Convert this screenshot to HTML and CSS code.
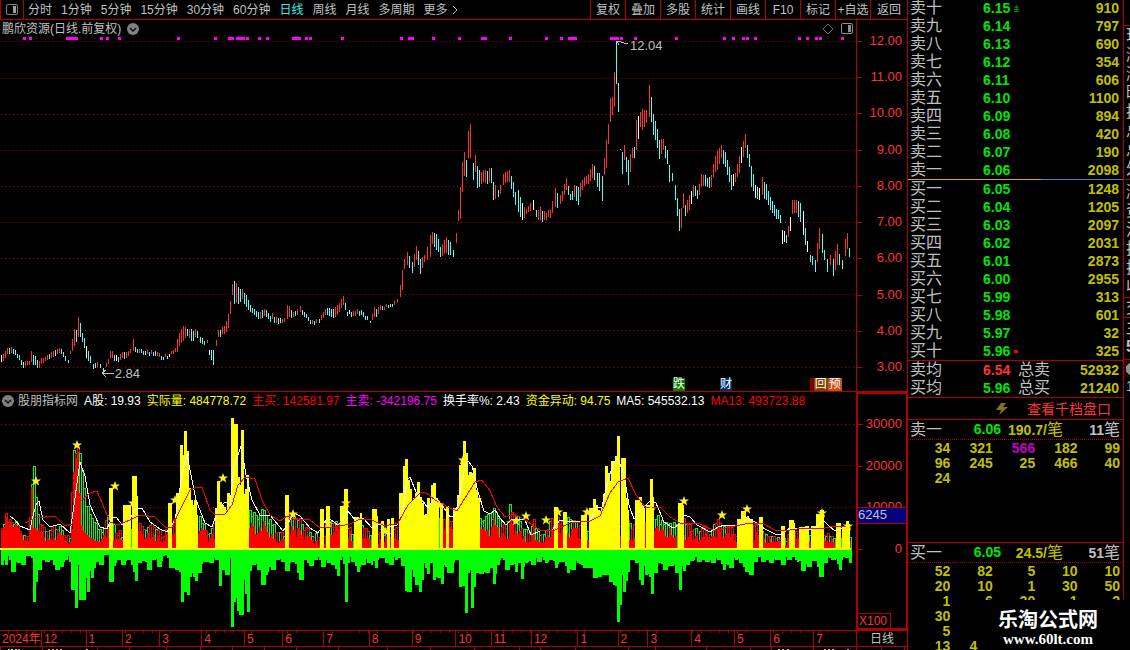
FILE: index.html
```html
<!DOCTYPE html>
<html lang="zh-CN">
<head>
<meta charset="utf-8">
<title>鹏欣资源 日线</title>
<link rel="stylesheet" href="styles.css">
</head>
<body>
<div class="app">
  <main class="main">
    <nav class="toolbar">
      <button class="layout-btn" aria-label="布局"><svg width="12" height="11" viewBox="0 0 12 11"><rect x="0.5" y="0.5" width="11" height="10" rx="1.5" fill="none" stroke="#808080"/><rect x="7" y="2" width="3" height="7" fill="#a0a0a0"/></svg></button>
      <div class="periods">
        <button>分时</button><button>1分钟</button><button>5分钟</button><button>15分钟</button><button>30分钟</button><button>60分钟</button><button class="active">日线</button><button>周线</button><button>月线</button><button>多周期</button><button class="more">更多<svg width="6" height="10" viewBox="0 0 6 10"><path d="M1 1l4 4-4 4" fill="none" stroke="#c0c0c0"/></svg></button>
      </div>
      <div class="actions">
        <button>复权</button><button>叠加</button><button>多股</button><button>统计</button><button>画线</button><button>F10</button><button>标记</button><button>+自选</button><button>返回</button>
      </div>
    </nav>

    <section class="pane price">
      <div class="plot">
        <header class="legend">
          <span class="title">鹏欣资源(日线.前复权)</span>
          <button class="fold" aria-label="展开"><svg width="12" height="12" viewBox="0 0 12 12"><circle cx="6" cy="6" r="6" fill="#808080"/><path d="M3 5l3 3 3-3" fill="none" stroke="#111" stroke-width="1.5"/></svg></button>
          <span class="tools"><svg width="12" height="12" viewBox="0 0 12 12"><path d="M6 1l5 5-5 5-5-5z" fill="none" stroke="#707070"/></svg><svg width="12" height="11" viewBox="0 0 12 11"><rect x="0.5" y="0.5" width="11" height="10" rx="1.5" fill="none" stroke="#909090"/><rect x="7" y="2" width="3" height="7" fill="#909090"/></svg></span>
        </header>
        <svg class="chart" id="price" viewBox="0 37 856 354" preserveAspectRatio="none"></svg>
        <span class="note high">12.04</span>
        <span class="note low">2.84</span>
        <span class="badge fall">跌</span>
        <span class="badge fin">财</span>
        <span class="badge group"><i></i><b class="buy">回</b><b class="pre">预</b></span>
      </div>
      <div class="axis price-axis"><span>12.00</span><span>11.00</span><span>10.00</span><span>9.00</span><span>8.00</span><span>7.00</span><span>6.00</span><span>5.00</span><span>4.00</span><span>3.00</span></div>
    </section>

    <section class="pane volume">
      <div class="plot">
        <header class="legend values">
          <button class="fold" aria-label="展开"><svg width="12" height="12" viewBox="0 0 12 12"><circle cx="6" cy="6" r="6" fill="#808080"/><path d="M3 5l3 3 3-3" fill="none" stroke="#111" stroke-width="1.5"/></svg></button>
          <span class="title">股朋指标网</span><span class="white">A股: 19.93</span><span class="yellow">实际量: 484778.72</span><span class="red">主买: 142581.97</span><span class="magenta">主卖: -342196.75</span><span class="white">换手率%: 2.43</span><span class="yellow">资金异动: 94.75</span><span class="white">MA5: 545532.13</span><span class="red">MA13: 493723.88</span>
        </header>
        <svg class="chart" id="volume" viewBox="0 409 856 221" preserveAspectRatio="none"></svg>
      </div>
      <div class="axis volume-axis"><span>30000</span><span>20000</span><span>10000</span><span>0</span><b class="current">6245</b><em class="unit">X100</em></div>
    </section>

    <footer class="dates"><div class="months" id="months"></div><span class="period">日线</span></footer>
    <div class="ticker"><svg class="chart" id="ticker" viewBox="0 647 907 3" preserveAspectRatio="none"></svg></div>
  </main>

  <aside class="book">
    <table class="depth asks" id="asks"></table>
    <div class="split"></div>
    <table class="depth" id="bids"></table>
    <table class="depth sums" id="sums"></table>
    <a class="more-depth" href="#"><svg width="14" height="14" viewBox="0 0 14 14"><path d="M6 1h5L8 5h5L4 13l2-5H1z" fill="#807028"/></svg><span>查看千档盘口</span></a>
    <section class="queue sell">
      <header><span>卖一</span><b class="up">6.06</b><b class="avg">190.7/<i>笔</i></b><b class="cnt">11<i>笔</i></b></header>
      <div class="lots" id="sell"></div>
    </section>
    <section class="queue">
      <header><span>买一</span><b class="up">6.05</b><b class="avg">24.5/<i>笔</i></b><b class="cnt">51<i>笔</i></b></header>
      <div class="lots" id="buy"></div>
    </section>
  </aside>

  <aside class="edge">
    <div class="edge-a"></div>
    <div class="edge-b">现<br>涨<br>涨<br>昨<br>换<br>总<br>总<br>外</div>
    <div class="edge-c">涨<br>资<br>流<br>换<br>换<br>收</div>
    <div class="edge-d">交</div>
    <div class="edge-e">主<br><b>5</b></div>
    <div class="edge-f"></div>
    <div class="edge-g">1</div>
  </aside>

  <div class="brand"><strong>乐淘公式网</strong><span>www.60lt.com</span></div>
</div>
<script src="app.js"></script>
</body>
</html>
```
FILE: styles.css
```css
* { box-sizing: border-box; }
body {
  margin: 0;
  background: #000;
  color: #c0c0c0;
  font: 12px/14px "Liberation Sans", "Noto Sans CJK SC", sans-serif;
}
button { margin: 0; padding: 0; border: 0; background: none; color: inherit; font: inherit; white-space: nowrap; }
svg { display: block; }
i, em { font-style: normal; }

.app { position: relative; display: grid; grid-template-columns: 1fr 216px 6px; height: 100vh; overflow: hidden; }
.main { display: grid; grid-template-rows: 20px 372fr 238fr 17px 3px; min-width: 0; min-height: 0; border-right: 1px solid #b00000; }

.toolbar { display: flex; border-bottom: 1px solid #b00000; border-left: 1px solid #b00000; line-height: 18px; }
.layout-btn { display: flex; align-items: center; justify-content: center; width: 23px; border-right: 1px solid #b00000; }
.periods { display: flex; gap: 9px; padding-left: 4px; flex: 1; }
.active { color: #40f0f0; }
.more { display: flex; align-items: center; gap: 4px; }
.actions { display: flex; }
.actions button { width: 35px; border-left: 1px solid #b00000; text-align: center; }
.actions button:last-child { width: 37px; }

.pane { display: grid; grid-template-columns: 1fr 51px; min-height: 0; }
.plot { position: relative; display: flex; flex-direction: column; min-width: 0; min-height: 0; }
.chart { width: 100%; flex: 1; min-height: 0; shape-rendering: crispEdges; }
.price { border-bottom: 1px solid #b00000; }
.legend { display: flex; align-items: center; height: 17px; padding-left: 2px; gap: 6px; white-space: nowrap; }
.values .title { margin-left: -2px; }
.fold { width: 12px; }
.tools { display: flex; align-items: center; gap: 7px; margin-left: auto; padding-right: 3px; }
.white { color: #fff; }
.yellow { color: #ff0; }
.red { color: #f00; }
.magenta { color: #f0f; }

.axis { position: relative; display: flex; flex-direction: column; justify-content: space-between; text-align: right; color: #ff3232; font-size: 13px; }
.price-axis { border-left: 1px solid #b00000; padding: 14px 5px 17px 0; }
.volume-axis { border: 2px solid #b00000; border-right-width: 1px; padding: 23px 4px 72px 0; }
.axis span { position: relative; }
.axis span::before { content: ""; position: absolute; left: 0; top: 7px; width: 5px; height: 1px; background: #b00000; }
.current { position: absolute; left: 0; right: 0; top: 113px; height: 17px; background: #000080; border: solid #b00000; border-width: 1px 0; color: #c0c0c0; font-weight: 400; text-align: left; }
.unit { position: absolute; left: 0; bottom: 0; padding: 0 3px 0 1px; border: solid #b00000; border-width: 1px 1px 0 0; font-size: 12px; }

.note { position: absolute; font-size: 13px; }
.high { left: 73.6%; top: 19px; }
.low { left: 13.4%; bottom: 10px; }
.badge { position: absolute; bottom: 0; color: #fff; line-height: 13px; height: 13px; }
.fall { left: 78.6%; background: #008000; }
.fin { left: 84.1%; background: #003068; }
.group { display: flex; left: 94.6%; }
.group i { width: 4px; background: #800000; }
.group b { font-weight: 400; padding: 0 1px; }
.buy { background: #804000; }
.pre { background: #c05010; }

.dates { display: grid; grid-template-columns: 1fr 50px; border: solid #b00000; border-width: 1px 0; line-height: 16px; }
.months { display: flex; color: #ff3232; min-width: 0; background: repeating-linear-gradient(90deg, transparent 0 8px, #b00000 8px 9px) top / 100% 2px no-repeat; }
.months span { flex: 1 1 0; min-width: 0; border-right: 1px solid #b00000; padding-left: 2px; white-space: nowrap; }
.period { text-align: center; }
.ticker { display: flex; min-height: 0; }

.book { min-width: 0; border-right: 1px solid #b00000; overflow: hidden; }
.depth { width: 100%; border-collapse: collapse; table-layout: fixed; font-size: 16px; line-height: 18px; }
.asks { margin-top: -1px; }
.depth td, .depth th { padding: 0; height: 18px; font-weight: 400; text-align: left; white-space: nowrap; }
.depth th { width: 75px; padding-left: 2px; }
.depth td:nth-child(2) { width: 35px; }
.depth b { display: block; height: 18px; font-size: 14px; }
.depth .price-cell { display: flex; align-items: center; gap: 4px; }
.price-cell svg, .dot { flex: none; }
.dot { width: 4px; height: 3px; background: #f00; }
.up { color: #00e600; }
.down { color: #ff3232; }
.depth td.qty { color: #c0c000; text-align: right; padding-right: 4px; }
.split { height: 1px; background: linear-gradient(90deg, #e0a050 62%, #4080d0 62%); }
.sums { border-top: 1px solid #b00000; border-bottom: 1px solid #b00000; border-collapse: separate; border-spacing: 0; }
.more-depth { display: flex; align-items: center; justify-content: flex-end; gap: 18px; height: 22px; padding-right: 12px; border-bottom: 1px solid #b00000; color: #ff3232; font-size: 14px; text-decoration: none; }

.queue header { display: grid; grid-template-columns: 42px 49px 1fr 57px; height: 20px; padding: 0 3px 0 2px; border-bottom: 1px dotted #b00000; font-size: 16px; line-height: 19px; }
.queue header b { height: 19px; font-size: 14px; text-align: right; white-space: nowrap; }
.queue header i { font-size: 16px; font-weight: 400; }
.avg { color: #c0c000; }
.sell { height: 123px; border-bottom: 1px solid #b00000; }
.lots { display: grid; grid-template-columns: repeat(5, 1fr); grid-auto-rows: 15px; padding: 1px 3px 0 0; color: #c0c000; font-size: 14px; font-weight: 700; line-height: 15px; text-align: right; }
.big { color: #c000c0; }

.edge { overflow: hidden; font-size: 16px; line-height: 19px; }
.edge div { padding-left: 2px; width: 24px; }
.edge-a { height: 25px; }
.edge-b { height: 154px; border-top: 1px solid #b00000; }
.edge-c { height: 118px; border-top: 1px solid #b00000; padding-top: 2px; }
.edge-d { height: 20px; border-top: 1px solid #b00000; }
.edge-e { height: 42px; border-top: 1px solid #b00000; }
.edge-f { height: 18px; border-top: 1px solid #b00000; background: radial-gradient(circle at 9px 9px, #909090 7px, #300000 7px); }
.edge-g { font-size: 14px; }

.brand { position: absolute; right: 0; bottom: 0; display: flex; flex-direction: column; align-items: center; width: 152px; height: 50px; padding: 6px 12px 0 0; background: #000; color: #fff; }
.brand strong { font: 700 20px/25px "Noto Sans CJK SC", sans-serif; }
.brand span { font: 700 15px/16px "Liberation Serif", serif; }
```
FILE: app.js
```javascript
const RED = '#ff3232', CYAN = '#54fcfc', LINE = '#b00000';
let seed = 7;
const rnd = () => (seed = (seed * 16807) % 2147483647) / 2147483647;
const nums = s => s.trim().split(/\s+/).map(t => t.split(',').map(Number));
const rect = (x, y, w, h, c) => `<rect x="${x}" y="${y}" width="${w}" height="${h}" fill="${c}"/>`;
const at = (k, x, c) => {
  let i = 0;
  while (i < k.length - 2 && k[i + 1][0] <= x) i++;
  const a = k[i], b = k[i + 1], t = Math.max(0, Math.min(1, (x - a[0]) / (b[0] - a[0])));
  return a[c] + (b[c] - a[c]) * t;
};
const grid = ys => ys.map(y => `<path d="M1 ${y + .5}H856" stroke="${LINE}" stroke-dasharray="1 3"/>`).join('');

/* price bars: x, high, low */
const bars = nums(`1,355,362 7,348,354 11,347,353 17,354,358 23,362,368 29,361,365 31,351,362 37,360,368 45,357,361 53,351,357 59,348,353 63,352,357 68,360,363 70,351,354 72,339,351 74,329,346 76,330,342 78,317,337 80,323,337 82,333,342 86,346,358 90,356,363 93,364,369 100,364,368 103,368,373 106,363,367 110,351,358 118,357,362 124,352,359 130,349,353 133,339,351 135,347,352 139,349,353 145,351,355 155,351,356 163,357,360 171,351,354 175,348,352 177,339,352 183,326,341 187,329,336 191,329,341 195,329,337 200,337,343 207,340,343 209,350,355 213,350,365 216,340,346 218,330,337 224,326,334 228,314,328 230,301,314 232,284,295 234,281,304 238,287,304 242,289,299 246,295,307 252,308,313 258,312,319 262,310,318 268,313,319 276,317,323 284,318,322 287,305,319 293,312,317 300,306,312 306,314,318 312,320,324 319,319,323 327,308,315 333,309,318 337,305,315 343,296,305 347,312,316 357,309,314 363,312,317 370,321,323 374,307,317 382,306,310 390,304,307 397,299,303 400,285,297 402,270,290 404,259,269 407,252,265 412,262,273 416,246,260 420,259,274 424,255,262 427,247,260 430,235,257 432,232,244 436,234,250 440,247,257 446,237,253 450,242,255 453,250,257 456,233,243 458,210,221 460,187,219 462,162,192 464,152,176 466,160,177 468,131,158 470,124,158 473,163,180 475,155,172 477,166,188 481,172,184 485,170,183 491,168,183 493,182,200 498,190,197 503,174,185 509,170,182 513,182,197 515,192,205 518,190,212 522,203,220 526,209,214 533,200,210 536,210,217 540,207,220 546,213,220 550,210,218 555,188,207 560,195,204 566,178,190 570,194,200 574,185,197 578,187,205 582,180,190 586,176,184 592,164,178 597,173,187 602,176,201 604,158,175 606,140,168 608,124,144 610,98,122 612,97,115 614,72,107 616,41,84 618,83,112 620,149,150 622,152,174 624,145,160 626,157,172 628,160,185 632,148,158 634,147,158 636,120,150 640,112,127 642,109,130 646,110,123 649,85,117 651,97,122 653,114,135 655,121,140 659,140,159 663,139,150 667,150,164 669,165,182 672,173,181 675,185,200 679,209,231 681,208,228 683,193,208 685,205,216 689,195,210 693,185,197 697,190,199 701,174,187 707,178,187 711,175,187 713,164,177 717,151,170 721,145,158 725,152,167 731,175,190 735,173,182 739,156,173 743,141,157 745,134,148 749,154,167 751,166,187 755,185,198 759,188,200 762,177,195 766,184,200 770,197,210 774,205,216 780,215,223 782,230,244 786,235,243 790,217,231 792,200,214 796,200,213 800,203,222 803,211,235 807,241,252 810,255,262 815,260,272 817,243,262 819,228,249 822,234,253 824,250,260 827,259,272 830,255,265 833,259,276 837,244,265 839,254,265 842,260,269 845,239,256 847,233,249 849,248,257`);
const xs = bars.map(b => b[0]);
for (let i = 0; i < bars.length - 1; i++)
  for (let x = bars[i][0] + 2; x < bars[i + 1][0] - 1; x += 2) xs.push(x);
xs.sort((a, b) => a - b);
const keyed = new Set(bars.map(b => b[0]));
let out = grid([41, 78, 114, 150, 186, 222, 258, 294, 330, 367]);
let prev = 360;
for (const x of xs) {
  const j = keyed.has(x) ? 0 : (rnd() - .5) * 4;
  const hi = Math.round(at(bars, x, 1) + j), lo = Math.round(at(bars, x, 2) + j), mid = (hi + lo) / 2;
  const c = x === 616 || x === 618 ? CYAN : rnd() < .04 ? '#fff' : mid + (rnd() - .5) * 4 > prev ? CYAN : RED;
  out += rect(x, hi, 1, Math.max(1, lo - hi), c);
  prev = mid;
}
for (const x of [23, 29, 66, 69, 72, 75, 100, 106, 118, 177, 214, 228, 231, 236, 239, 242, 246, 258, 266, 292, 295, 298, 305, 309, 341, 400, 408, 411, 432, 458, 481, 484, 509, 545, 560, 568, 571, 574, 610, 613, 616, 620, 634, 675, 723, 732, 742, 746, 754, 798, 806, 815, 819, 841])
  out += rect(x, 37, 3, 3, '#f0f');
out += `<path d="M617 41l11 3M617 41h4M617 41l2 4M102 373h12M102 373l4-3M102 373l4 4" stroke="#c0c0c0" fill="none"/>`;
document.getElementById('price').innerHTML = out;

/* active volume: x, top */
const hot = nums(`109,488 111,488 124,505 128,505 130,506 133,476 136,496 169,503 177,493 179,445 181,455 183,431 185,451 187,488 189,500 191,505 193,500 195,515 215,508 217,481 219,502 221,505 223,507 225,510 227,493 229,500 231,418 234,424 236,477 238,485 240,430 242,494 244,489 246,475 286,495 321,509 327,506 341,506 345,489 355,517 357,518 359,513 373,509 375,516 381,521 387,519 392,518 400,493 402,466 404,459 406,480 408,489 410,500 412,498 414,493 416,482 418,497 420,503 422,515 424,514 426,498 428,505 430,485 432,483 434,498 436,505 441,503 447,506 454,508 456,495 458,465 460,461 462,441 464,453 467,475 469,472 471,473 473,468 475,490 477,498 555,507 564,512 582,515 584,514 590,508 592,499 594,505 596,510 598,511 600,508 602,494 604,466 606,473 608,481 610,461 612,462 614,456 616,436 618,458 622,458 624,498 626,510 636,500 638,497 640,505 642,508 647,505 649,479 651,497 679,503 682,505 738,519 742,511 745,517 747,516 750,519 760,517 782,526 790,520 792,523 801,527 806,526 812,526 817,514 819,510 821,510 837,523 840,525 843,526 846,521 848,524`);
/* ordinary volume outline: x, top */
const calm = nums(`1,523 5,512 8,518 15,520 20,528 28,532 31,484 33,466 35,497 37,508 40,523 45,530 50,525 55,522 60,525 65,535 70,535 72,449 74,450 76,455 78,439 80,467 82,475 84,500 88,505 92,515 96,525 101,530 107,515 115,527 121,530 139,520 145,528 150,520 157,527 163,532 167,525 174,518 198,514 200,515 204,525 210,530 212,518 214,520 249,508 251,510 254,507 257,515 262,500 265,515 270,520 275,527 283,530 290,506 293,515 300,512 302,523 306,525 312,530 318,532 324,530 331,523 338,517 350,528 362,520 366,530 370,528 380,530 395,525 443,515 451,520 480,515 486,513 491,512 493,502 495,510 499,518 505,525 509,504 513,515 517,515 523,527 530,530 533,515 537,530 545,528 552,515 559,517 568,515 574,520 588,530 629,519 631,523 634,518 654,514 657,515 660,518 665,520 668,517 672,523 675,517 686,519 690,525 698,529 702,519 706,530 710,533 713,517 718,517 722,522 726,520 730,525 735,530 755,523 765,528 775,532 779,534 786,534 797,530 825,530 830,530 834,533 850,530`);
const depth = nums(`1,565 5,565 7,556 12,572 18,563 22,565 28,556 31,558 33,602 35,582 38,570 42,560 46,562 50,560 56,570 60,567 65,560 69,562 72,590 74,608 76,565 78,600 82,600 84,578 86,592 88,571 90,578 92,568 96,562 100,565 106,555 110,582 113,566 118,560 122,565 128,560 135,581 138,563 142,561 148,570 152,560 158,567 165,555 170,568 176,570 178,572 181,602 184,592 187,595 189,577 195,581 198,573 204,562 210,563 216,560 218,586 222,570 226,575 229,558 231,627 233,602 235,598 237,611 240,615 242,580 244,594 246,612 248,571 252,565 258,570 262,585 264,575 272,570 276,560 282,562 286,571 292,562 300,580 302,560 310,566 315,560 322,567 328,563 332,565 337,576 339,560 343,564 345,602 347,563 352,562 357,572 362,565 368,563 375,568 380,558 386,563 390,565 395,560 402,566 404,591 408,592 410,570 416,585 418,592 420,580 423,563 427,574 430,563 433,580 438,578 440,584 443,565 447,573 451,573 456,560 458,587 462,586 464,613 466,573 468,570 470,608 472,587 476,573 480,574 486,573 490,568 493,584 497,565 503,560 506,570 510,565 515,572 519,563 521,579 525,563 532,565 538,562 545,563 550,560 555,568 562,562 567,573 572,570 577,563 584,568 590,568 594,578 598,577 602,575 606,575 610,582 612,585 614,586 616,622 618,605 620,575 622,592 624,581 626,572 630,560 636,563 638,580 640,585 642,566 645,575 649,577 651,594 654,573 658,563 664,570 670,566 676,573 679,590 681,566 683,571 686,565 690,561 698,562 706,562 712,563 718,560 723,570 730,568 735,560 740,563 746,572 750,575 754,562 762,562 770,563 778,560 782,565 788,560 795,560 802,571 808,567 814,561 820,577 824,563 832,560 839,570 845,558 849,563`);
const hotRanges = nums(`109,112 123,126 127,130 132,137 168,171 176,197 215,248 285,288 320,323 326,329 340,347 354,361 372,377 381,383 387,389 391,393 399,438 440,442 446,448 453,479 554,557 563,566 581,586 589,619 621,628 635,644 646,653 678,683 737,740 741,748 749,752 759,762 781,784 789,794 799,804 805,808 811,815 816,823 836,840 842,849`);
const isHot = x => hotRanges.some(r => x >= r[0] - 1 && x < r[1] - 1);
out = grid([424, 465, 507]);
for (let x = 1; x < 850; x += 2) {
  if (isHot(x)) continue;
  const peak = at(calm, x, 1), big = peak < 500;
  const top = Math.round(peak + (big ? 0 : rnd() * 7));
  const green = x === 33 || x === 35 || x === 73 || (x >= 79 && x <= 101) || (x > 479 && x < 500) || (x > 248 && x < 275) || (x > 653 && x < 676) || rnd() < .4;
  out += `<rect x="${x + .5}" y="${top + .5}" width="2" height="${549 - top}" fill="#000" stroke="${green ? '#00ff00' : '#ff0000'}"/>`;
  const solid = x < 22 ? .9 : x === 31 || x === 75 || x === 77 ? .95 : .35 + rnd() * .45;
  out += rect(x, Math.round(549 - (549 - top) * solid * (x === 33 || x > 79 && x < 100 ? .5 : 1)), 2, Math.ceil((549 - top) * solid) + 1, '#f00');
}
for (const [a, b] of hotRanges)
  for (let x = a; x < b; x += 2) {
    const k = hot.reduce((m, h) => Math.abs(h[0] - x) < Math.abs(m[0] - x) ? h : m);
    out += rect(x, k[1], Math.min(3, b - x + 1), 549 - k[1], '#ff0');
  }
for (let x = 1; x < 850; x += 2) {
  let k = depth.find(d => Math.abs(d[0] - x) <= 1);
  const y = k ? k[1] : Math.min(at(depth, x, 1), 585) - rnd() * 6;
  out += rect(x, 549, 2 + (k ? 1 : 0), Math.round(Math.max(y, 554)) - 549, '#0f0');
}
out += rect(0, 548, 851, 2, '#ff0');
const ma5 = '10,516 15,520 20,526 30,530 32,520 36,505 39,501 43,520 50,527 60,524 70,533 74,505 80,462 85,476 90,505 100,527 107,529 112,517 117,518 122,525 128,524 135,508 142,508 150,522 160,529 167,532 175,520 182,475 187,454 190,470 196,500 205,523 212,527 218,510 225,502 230,505 234,467 241,446 246,475 252,500 260,515 270,515 283,531 290,520 294,513 300,516 310,528 318,533 326,520 330,519 338,525 343,520 347,510 352,516 358,524 363,518 372,528 380,524 390,527 397,525 402,515 407,480 410,477 416,492 422,500 428,508 435,497 442,505 450,517 455,516 460,495 465,465 468,461 472,466 478,492 484,511 490,514 495,510 500,518 506,525 512,519 525,520 531,535 540,531 552,530 560,520 570,522 590,521 596,508 602,507 608,480 614,462 618,458 624,475 629,505 634,519 642,509 650,501 656,503 664,522 673,528 680,524 684,515 690,517 697,525 710,532 718,527 725,525 735,526 742,523 748,518 755,522 765,529 775,534 780,535 790,528 800,528 810,530 818,526 823,520 828,525 835,531 842,528 850,526';
const ma13 = '25,523 35,518 55,516 65,526 72,524 80,502 90,493 97,491 105,510 110,522 118,525 130,520 140,515 155,517 165,527 172,527 180,510 190,490 197,487 202,487 210,510 215,515 225,514 232,505 238,485 245,477 255,479 262,500 270,515 280,521 287,516 293,519 310,520 320,528 335,527 350,524 360,519 372,520 385,526 398,523 408,505 420,493 425,492 435,500 450,508 457,511 465,498 475,482 482,480 490,491 497,507 505,517 515,514 525,520 540,530 555,530 570,523 590,521 600,516 610,493 618,482 628,478 636,495 645,507 660,507 670,517 680,523 700,524 715,531 730,527 745,524 762,523 775,530 790,530 805,528 820,529 835,526 850,527';
out += `<polyline points="${ma5}" fill="none" stroke="#fff"/><polyline points="${ma13}" fill="none" stroke="#f00"/>`;
for (const [x, y] of nums('36,481 77,445 115,486 133,503 175,500 223,478 293,514 346,503 328,523 385,531 439,505 463,460 516,521 526,516 546,520 558,512 587,512 651,510 684,501 722,515 747,509 822,513 848,526'))
  out += `<path transform="translate(${x} ${y})" shape-rendering="auto" fill="#fff020" d="M0-5L1.3-1.5H5L2.1.8 3.2 4.5 0 2.3-3.2 4.5-2.1.8-5-1.5H-1.3z"/>`;
document.getElementById('volume').innerHTML = out;

const edges = [0, 42, 87, 123, 160, 202, 245, 283, 324, 370, 413, 457, 492, 532, 579, 619, 648, 692, 735, 771, 814, 857];
document.getElementById('months').innerHTML = ['2024年', 12, 1, 2, 3, 4, 5, 6, 7, 8, 9, 10, 11, 12, 1, 2, 3, 4, 5, 6, 7]
  .map((m, i) => `<span style="flex-grow:${edges[i + 1] - edges[i]}">${m}</span>`).join('');

out = '';
for (const x of [0, 42, 97, 129, 166, 200, 232, 264, 296, 338, 387, 430, 474, 519, 540, 575, 628, 655, 706, 750, 771, 813, 856, 881, 904]) out += rect(x, 647, 1, 3, LINE);
for (const x of [8, 11, 15, 18, 778, 782, 787, 824, 828, 832, 847]) out += rect(x, 649, 2, 1, '#c0c0c0');
for (const x of [48, 52, 56, 60, 86]) out += rect(x, 649, 2, 1, '#c0c000');
document.getElementById('ticker').innerHTML = out;

const row = (name, price, qty, cls = 'up', mid = '', extra = '') =>
  `<tr><th scope="row">${name}</th><td class="${cls}"><b class="price-cell">${price}${extra}</b></td><td>${mid}</td><td class="qty"><b>${qty}</b></td></tr>`;
const arrow = '<svg width="5" height="7" viewBox="0 0 5 7"><path d="M2.5 0L5 3H3v1h2v1H3v1h2v1H0V6h2V5H0V4h2V3H0z" fill="#008000"/></svg>';
const cn = '一二三四五六七八九十';
const asks = [2098, 190, 420, 894, 1100, 606, 354, 690, 797, 910];
const bids = [1248, 1205, 2097, 2031, 2873, 2955, 313, 601, 32, 325];
document.getElementById('asks').innerHTML = asks.map((q, i) => row('卖' + cn[i], (6.06 + i / 100).toFixed(2), q, 'up', '', i === 9 ? arrow : '')).reverse().join('');
document.getElementById('bids').innerHTML = bids.map((q, i) => row('买' + cn[i], (6.05 - i / 100).toFixed(2), q, 'up', '', i === 9 ? '<i class="dot"></i>' : '')).join('');
document.getElementById('sums').innerHTML = row('卖均', '6.54', 52932, 'down', '总卖') + row('买均', '5.96', 21240, 'up', '总买');
const lots = a => a.map(n => `<span${n === 566 ? ' class="big"' : ''}>${n}</span>`).join('');
document.getElementById('sell').innerHTML = lots([34, 321, 566, 182, 99, 96, 245, 25, 466, 40, 24]);
document.getElementById('buy').innerHTML = lots([52, 82, 5, 10, 10, 20, 10, 1, 30, 50, 1, 6, 20, 1, 2, 30, 10, '', '', '', 5, 10, '', '', '', 13, 415]);
```
